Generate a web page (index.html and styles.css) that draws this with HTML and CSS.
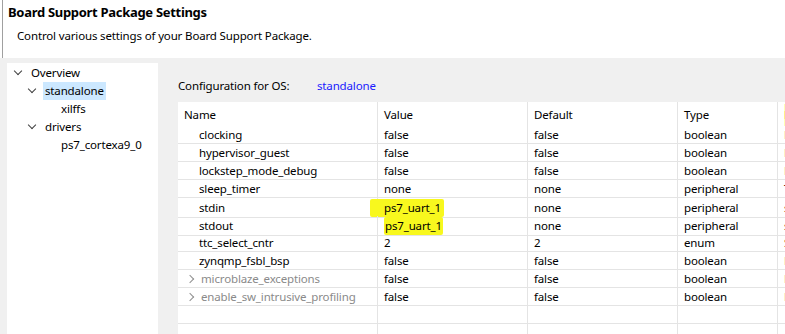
FILE: index.html
```html
<!DOCTYPE html>
<html lang="en">
<head>
  <meta charset="UTF-8">
  <title>Board Support Package Settings</title>
  <link rel="stylesheet" href="styles.css">
</head>
<body>
  <!-- Title area -->
  <div class="page-head">
    <div class="page-title">Board Support Package Settings</div>
    <div class="page-desc">Control various settings of your Board Support Package.</div>
  </div>

  <div class="main">
    <!-- Tree -->
    <div class="tree">
      <div class="node lvl0"><span class="chev down"></span><span class="label">Overview</span></div>
      <div class="node lvl1"><span class="chev down"></span><span class="label selected">standalone</span></div>
      <div class="node lvl2"><span class="label">xilffs</span></div>
      <div class="node lvl1"><span class="chev down"></span><span class="label">drivers</span></div>
      <div class="node lvl2"><span class="label">ps7_cortexa9_0</span></div>
    </div>

    <!-- Configuration -->
    <div class="config">
      <div class="config-line">
        <span class="config-label">Configuration for OS:</span>
        <span class="config-os">standalone</span>
      </div>

      <div class="grid">
        <div class="row head">
          <div class="cell name">Name</div>
          <div class="cell">Value</div>
          <div class="cell">Default</div>
          <div class="cell">Type</div>
          <div class="cell desc"><span class="mark-pale">Description</span></div>
        </div>
        <div class="row">
          <div class="cell name sub">clocking</div>
          <div class="cell">false</div>
          <div class="cell">false</div>
          <div class="cell">boolean</div>
          <div class="cell desc">Enable clocking support</div>
        </div>
        <div class="row">
          <div class="cell name sub">hypervisor_guest</div>
          <div class="cell">false</div>
          <div class="cell">false</div>
          <div class="cell">boolean</div>
          <div class="cell desc">Enable hypervisor guest support</div>
        </div>
        <div class="row">
          <div class="cell name sub">lockstep_mode_debug</div>
          <div class="cell">false</div>
          <div class="cell">false</div>
          <div class="cell">boolean</div>
          <div class="cell desc">Enable debug logic in non-JTAG boot mode</div>
        </div>
        <div class="row">
          <div class="cell name sub">sleep_timer</div>
          <div class="cell">none</div>
          <div class="cell">none</div>
          <div class="cell">peripheral</div>
          <div class="cell desc">This parameter is used to select specific timer</div>
        </div>
        <div class="row">
          <div class="cell name sub">stdin</div>
          <div class="cell open"><span class="mark mark-in">ps7_uart_1</span></div>
          <div class="cell">none</div>
          <div class="cell">peripheral</div>
          <div class="cell desc">stdin peripheral</div>
        </div>
        <div class="row">
          <div class="cell name sub">stdout</div>
          <div class="cell open"><span class="mark mark-out">ps7_uart_1</span></div>
          <div class="cell">none</div>
          <div class="cell">peripheral</div>
          <div class="cell desc">stdout peripheral</div>
        </div>
        <div class="row">
          <div class="cell name sub">ttc_select_cntr</div>
          <div class="cell">2</div>
          <div class="cell">2</div>
          <div class="cell">enum</div>
          <div class="cell desc">Selects the counter to be used</div>
        </div>
        <div class="row">
          <div class="cell name sub">zynqmp_fsbl_bsp</div>
          <div class="cell">false</div>
          <div class="cell">false</div>
          <div class="cell">boolean</div>
          <div class="cell desc">Disable or Enable Optimization for FSBL's BSP</div>
        </div>
        <div class="row">
          <div class="cell name sub off"><span class="chev right"></span>microblaze_exceptions</div>
          <div class="cell">false</div>
          <div class="cell">false</div>
          <div class="cell">boolean</div>
          <div class="cell desc">Enable MicroBlaze Exceptions</div>
        </div>
        <div class="row">
          <div class="cell name sub off"><span class="chev right"></span>enable_sw_intrusive_profiling</div>
          <div class="cell">false</div>
          <div class="cell">false</div>
          <div class="cell">boolean</div>
          <div class="cell desc">Enable S/W Intrusive Profiling</div>
        </div>
        <div class="row">
          <div class="cell name"></div><div class="cell"></div><div class="cell"></div><div class="cell"></div><div class="cell desc"></div>
        </div>
        <div class="row">
          <div class="cell name"></div><div class="cell"></div><div class="cell"></div><div class="cell"></div><div class="cell desc"></div>
        </div>
      </div>
    </div>
  </div>
</body>
</html>
```

FILE: styles.css
```css
/* Common */
html, body {
  margin: 0;
  padding: 0;
  height: 100%;
  overflow: hidden;
}

body {
  font-family: "Noto Sans", "Open Sans", sans-serif;
  font-size: 11.5px;
  letter-spacing: -0.15px;
  color: #000;
  background: #fff;
}

/* Title area */
.page-head {
  height: 58px;
  box-sizing: border-box;
  margin-left: 2px;
  border-left: 1px solid #a0a0a0;
  padding: 2px 0 0 5px;
}

.page-title {
  font-size: 13px;
  font-weight: bold;
  letter-spacing: -0.3px;
  line-height: 20px;
}

.page-desc {
  margin-top: 5px;
  padding-left: 9px;
  line-height: 18px;
}

/* Main area */
.main {
  display: flex;
  background: #f0f0f0;
  height: 276px;
  padding: 5px 0 0 7px;
  box-sizing: border-box;
}

/* Tree */
.tree {
  width: 151px;
  flex: none;
  background: #fff;
  padding-top: 1px;
}

.node {
  display: flex;
  align-items: center;
  height: 18px;
}

.lvl0 { padding-left: 6px; }
.lvl1 { padding-left: 20px; }
.lvl2 { padding-left: 52px; }

.label {
  line-height: 18px;
  padding: 0 2px;
}

.label.selected {
  background: #cce8ff;
}

.chev {
  display: inline-block;
  width: 6px;
  height: 6px;
  border-right: 1.5px solid #404040;
  border-bottom: 1.5px solid #404040;
  box-sizing: border-box;
  flex: none;
}

.chev.down {
  transform: rotate(45deg);
  margin: -4px 8px 0 2px;
}

.chev.right {
  transform: rotate(-45deg);
  border-color: #909090;
  margin: 0 8px 0 -12px;
}

/* Configuration */
.config {
  flex: 1;
  padding-left: 20px;
  min-width: 0;
}

.config-line {
  display: flex;
  line-height: 18px;
  margin: 14px 0 7px;
}

.config-label {
  width: 139px;
}

.config-os {
  color: #1a1aff;
}

/* Grid of properties */
.grid {
  background: #fff;
  width: 800px;
}

.row {
  display: grid;
  grid-template-columns: 200px 150px 150px 100px 200px;
  height: 18px;
}

.row.head {
  height: 24px;
}

.cell {
  box-sizing: border-box;
  border-right: 1px solid #e4e4e4;
  border-bottom: 1px solid #e4e4e4;
  padding: 1px 0 0 6px;
  line-height: 16px;
  white-space: nowrap;
  overflow: hidden;
  display: flex;
  align-items: center;
}

.cell.open {
  overflow: visible;
}

.head .cell {
  border-bottom: none;
  line-height: 22px;
}

.cell.sub {
  padding-left: 21px;
}

.cell.off {
  color: #8a8a8a;
}

.cell.desc {
  color: #6b0f0f;
  border-right: none;
}

/* Highlighter marks */
.mark {
  background: #f8f81e;
  line-height: 18px;
  border-radius: 2px;
}

.mark-in {
  margin-left: -14px;
  padding: 0 3px 0 14px;
}

.mark-out {
  padding: 0 1px;
}

.mark-pale {
  background: #ffffb4;
  color: #000;
}
```
